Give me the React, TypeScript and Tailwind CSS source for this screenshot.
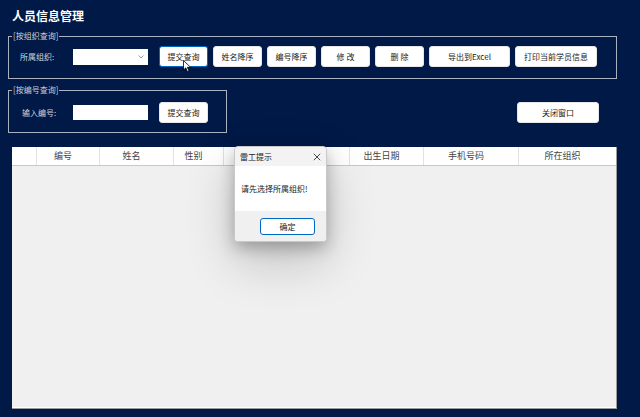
import React from "react";

const FONT = { fontFamily: '"Noto Sans CJK SC", "Noto Sans", sans-serif' };

function Btn({ children, w = "w-[49px]", focus = false }: { children: React.ReactNode; w?: string; focus?: boolean }) {
  return (
    <div
      className={`${w} h-[21px] shrink-0 rounded-[3px] bg-white flex items-center justify-center text-[8px] text-[#1a1a1a] ${
        focus ? "border border-[#0067c0]" : "border border-[#e6e6e6]"
      }`}
    >
      {children}
    </div>
  );
}

export default function App() {
  const cols: { w: string; label: string }[] = [
    { w: "w-[25px]", label: "" },
    { w: "w-[63px]", label: "编号" },
    { w: "w-[74px]", label: "姓名" },
    { w: "w-[50px]", label: "性别" },
    { w: "w-[126px]", label: "民族" },
    { w: "w-[74px]", label: "出生日期" },
    { w: "w-[95px]", label: "手机号码" },
    { w: "flex-1", label: "所在组织" },
  ];

  return (
    <div className="relative w-[640px] h-[417px] overflow-hidden bg-[#001947] px-[8px] pt-[8px]" style={FONT}>
      {/* Title */}
      <div className="h-[16px] pl-[4px] leading-[16px] text-[12px] font-bold text-white">人员信息管理</div>

      {/* Group 1 */}
      <fieldset className="mt-[6px] w-[609px] border border-[#aab2c2] px-[3px] pt-[4px] pb-[11px]">
        <legend className="px-[1px] text-[8px] leading-[12px] text-[#c9cfda]">[按组织查询]</legend>
        <div className="flex items-center pl-[8px]">
          <div className="w-[53px] text-[8px] text-[#d2d6de]">所属组织:</div>
          <div className="w-[75px] h-[16px] bg-white flex items-center justify-end pr-[4px]">
            <svg width="6" height="4" viewBox="0 0 6 4">
              <path d="M0.5 0.5 L3 3 L5.5 0.5" fill="none" stroke="#888" strokeWidth="0.8" />
            </svg>
          </div>
          <div className="ml-[11px] flex gap-[5px]">
            <Btn focus>提交查询</Btn>
            <Btn>姓名降序</Btn>
            <Btn>编号降序</Btn>
            <Btn>修&nbsp;改</Btn>
            <Btn>删&nbsp;除</Btn>
            <Btn w="w-[81px]">导出到Excel</Btn>
            <Btn w="w-[82px]">打印当前学员信息</Btn>
          </div>
        </div>
      </fieldset>

      {/* Row 2 */}
      <div className="mt-[5px] flex items-start">
        <fieldset className="w-[219px] border border-[#aab2c2] px-[3px] pt-[6px] pb-[9px]">
          <legend className="px-[1px] text-[8px] leading-[12px] text-[#c9cfda]">[按编号查询]</legend>
          <div className="flex items-center pl-[10px]">
            <div className="w-[51px] text-[8px] text-[#d2d6de]">输入编号:</div>
            <div className="w-[75px] h-[15px] bg-white" />
            <div className="ml-[11px]">
              <Btn>提交查询</Btn>
            </div>
          </div>
        </fieldset>
        <div className="ml-[290px] mt-[18px]">
          <Btn w="w-[82px]">关闭窗口</Btn>
        </div>
      </div>

      {/* Grid */}
      <div className="mt-[14px] ml-[4px] w-[605px] h-[262px] flex flex-col border-r border-b border-[#9a9a9a] bg-[#f0f0f0]">
        <div className="h-[19px] flex bg-white border-b border-[#c8c8c8] shrink-0">
          {cols.map((c, i) => (
            <div
              key={i}
              className={`${c.w} h-full flex items-center justify-center pr-[10px] text-[9px] text-[#444] ${
                i < cols.length - 1 ? "border-r border-[#e2e2e2]" : ""
              }`}
            >
              {c.label}
            </div>
          ))}
        </div>
        <div className="flex-1 border-b border-white" />
      </div>

      {/* Dialog */}
      <div className="absolute left-[234px] top-[146px] w-[93px] h-[96px] rounded-[4px] overflow-hidden border border-[#c8c8c8] bg-white flex flex-col shadow-[0_6px_16px_rgba(0,0,0,0.26),0_20px_50px_rgba(0,0,0,0.2)]">
        <div className="h-[19px] bg-[#f3f3f3] flex items-center justify-between pl-[5px] pr-[5px] shrink-0">
          <span className="text-[8px] text-[#222]">雷工提示</span>
          <svg width="8" height="8" viewBox="0 0 8 8">
            <path d="M0.8 0.8 L7.2 7.2 M7.2 0.8 L0.8 7.2" stroke="#333" strokeWidth="0.9" />
          </svg>
        </div>
        <div className="h-[45px] bg-white flex items-center pl-[6px] text-[8px] text-[#222]">请先选择所属组织!</div>
        <div className="flex-1 bg-[#f0f0f0] flex items-start pt-[7px] pl-[25px]">
          <div className="w-[55px] h-[17px] rounded-[3px] border border-[#0067c0] bg-white flex items-center justify-center text-[8px] text-[#222]">
            确定
          </div>
        </div>
      </div>

      {/* Cursor */}
      <svg className="absolute left-[183px] top-[60px]" width="9" height="13" viewBox="0 0 9 13">
        <path d="M0.5 0.5 L0.5 10 L2.8 7.8 L4.5 11.8 L6 11.1 L4.4 7.3 L7.6 7.3 Z" fill="white" stroke="black" strokeWidth="0.8" />
      </svg>
    </div>
  );
}
